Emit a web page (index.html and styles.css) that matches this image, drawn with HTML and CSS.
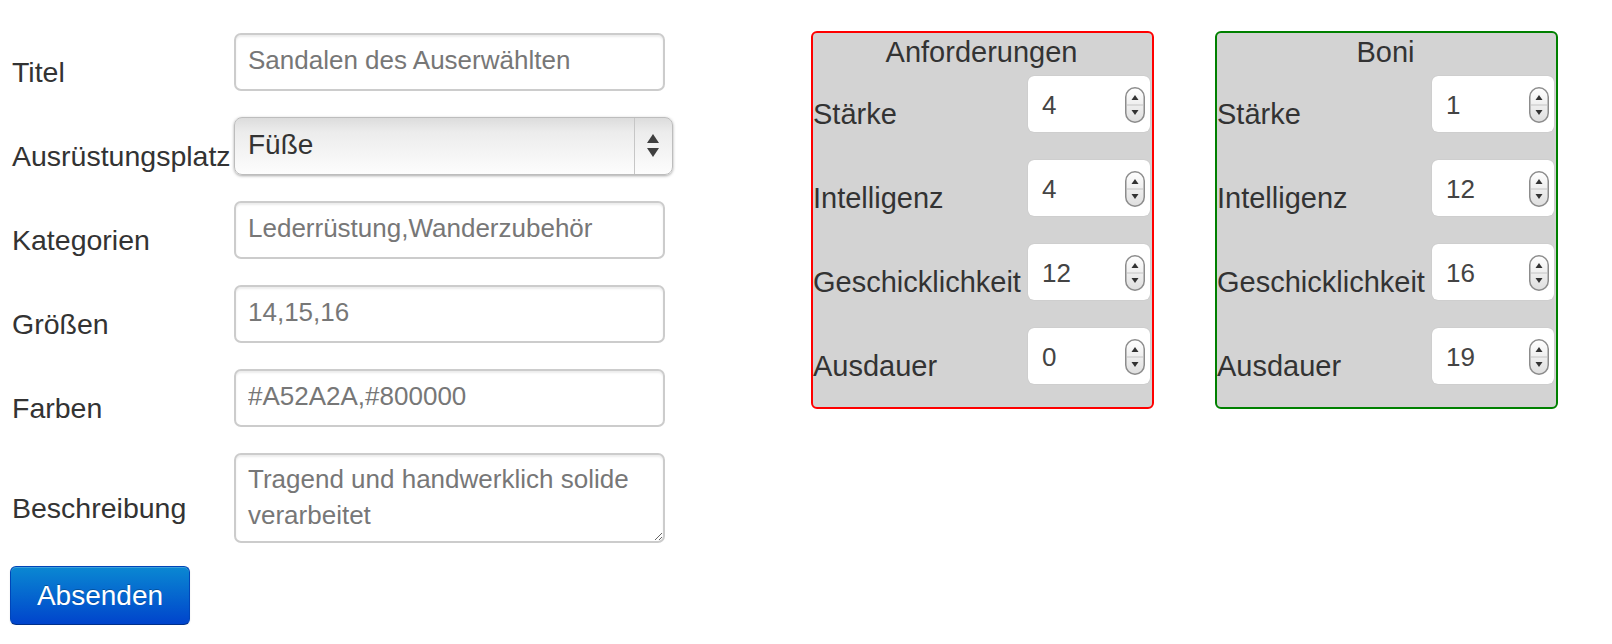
FILE: index.html
```html
<!DOCTYPE html>
<html lang="de">
<head>
<meta charset="utf-8">
<title>Ausrüstung</title>
<link rel="stylesheet" href="styles.css">
</head>
<body>
<svg class="defs" width="0" height="0" aria-hidden="true">
  <defs>
    <linearGradient id="spinGrad" x1="0" y1="0" x2="0" y2="1">
      <stop offset="0" stop-color="#ffffff"/>
      <stop offset="1" stop-color="#dedede"/>
    </linearGradient>
  </defs>
</svg>
<div class="page">
  <form class="item-form">
    <div class="row">
      <label class="lbl">Titel</label>
      <input class="field" type="text" value="Sandalen des Auserwählten">
    </div>
    <div class="row">
      <label class="lbl">Ausrüstungsplatz</label>
      <div class="select">
        <span class="select-value">Füße</span>
        <span class="select-btn">
          <svg width="37" height="56" viewBox="0 0 37 56">
            <path d="M12 25 L24 25 L18 16 Z" fill="#3f3f3f"/>
            <path d="M12 30 L24 30 L18 39 Z" fill="#3f3f3f"/>
          </svg>
        </span>
      </div>
    </div>
    <div class="row">
      <label class="lbl">Kategorien</label>
      <input class="field" type="text" value="Lederrüstung,Wanderzubehör">
    </div>
    <div class="row">
      <label class="lbl">Größen</label>
      <input class="field" type="text" value="14,15,16">
    </div>
    <div class="row">
      <label class="lbl">Farben</label>
      <input class="field" type="text" value="#A52A2A,#800000">
    </div>
    <div class="row row-area">
      <label class="lbl">Beschreibung</label>
      <textarea class="field area">Tragend und handwerklich solide verarbeitet</textarea>
    </div>
    <button class="btn" type="button">Absenden</button>
  </form>

  <div class="panel panel-req">
    <div class="panel-title">Anforderungen</div>
    <div class="stat">
      <span class="stat-label">Stärke</span>
      <div class="num"><span class="num-value">4</span><svg class="spin" width="20" height="36" viewBox="0 0 20 36"><rect x="0.75" y="0.75" width="18.5" height="34.5" rx="9.25" fill="url(#spinGrad)" stroke="#8c8c8c" stroke-width="1.5"/><line x1="2" y1="18" x2="18" y2="18" stroke="#c4c4c4" stroke-width="1"/><path d="M6.5 13 L13.5 13 L10 8 Z" fill="#333"/><path d="M6.5 23 L13.5 23 L10 28 Z" fill="#333"/></svg></div>
    </div>
    <div class="stat">
      <span class="stat-label">Intelligenz</span>
      <div class="num"><span class="num-value">4</span><svg class="spin" width="20" height="36" viewBox="0 0 20 36"><rect x="0.75" y="0.75" width="18.5" height="34.5" rx="9.25" fill="url(#spinGrad)" stroke="#8c8c8c" stroke-width="1.5"/><line x1="2" y1="18" x2="18" y2="18" stroke="#c4c4c4" stroke-width="1"/><path d="M6.5 13 L13.5 13 L10 8 Z" fill="#333"/><path d="M6.5 23 L13.5 23 L10 28 Z" fill="#333"/></svg></div>
    </div>
    <div class="stat">
      <span class="stat-label">Geschicklichkeit</span>
      <div class="num"><span class="num-value">12</span><svg class="spin" width="20" height="36" viewBox="0 0 20 36"><rect x="0.75" y="0.75" width="18.5" height="34.5" rx="9.25" fill="url(#spinGrad)" stroke="#8c8c8c" stroke-width="1.5"/><line x1="2" y1="18" x2="18" y2="18" stroke="#c4c4c4" stroke-width="1"/><path d="M6.5 13 L13.5 13 L10 8 Z" fill="#333"/><path d="M6.5 23 L13.5 23 L10 28 Z" fill="#333"/></svg></div>
    </div>
    <div class="stat">
      <span class="stat-label">Ausdauer</span>
      <div class="num"><span class="num-value">0</span><svg class="spin" width="20" height="36" viewBox="0 0 20 36"><rect x="0.75" y="0.75" width="18.5" height="34.5" rx="9.25" fill="url(#spinGrad)" stroke="#8c8c8c" stroke-width="1.5"/><line x1="2" y1="18" x2="18" y2="18" stroke="#c4c4c4" stroke-width="1"/><path d="M6.5 13 L13.5 13 L10 8 Z" fill="#333"/><path d="M6.5 23 L13.5 23 L10 28 Z" fill="#333"/></svg></div>
    </div>
  </div>

  <div class="panel panel-bonus">
    <div class="panel-title">Boni</div>
    <div class="stat">
      <span class="stat-label">Stärke</span>
      <div class="num"><span class="num-value">1</span><svg class="spin" width="20" height="36" viewBox="0 0 20 36"><rect x="0.75" y="0.75" width="18.5" height="34.5" rx="9.25" fill="url(#spinGrad)" stroke="#8c8c8c" stroke-width="1.5"/><line x1="2" y1="18" x2="18" y2="18" stroke="#c4c4c4" stroke-width="1"/><path d="M6.5 13 L13.5 13 L10 8 Z" fill="#333"/><path d="M6.5 23 L13.5 23 L10 28 Z" fill="#333"/></svg></div>
    </div>
    <div class="stat">
      <span class="stat-label">Intelligenz</span>
      <div class="num"><span class="num-value">12</span><svg class="spin" width="20" height="36" viewBox="0 0 20 36"><rect x="0.75" y="0.75" width="18.5" height="34.5" rx="9.25" fill="url(#spinGrad)" stroke="#8c8c8c" stroke-width="1.5"/><line x1="2" y1="18" x2="18" y2="18" stroke="#c4c4c4" stroke-width="1"/><path d="M6.5 13 L13.5 13 L10 8 Z" fill="#333"/><path d="M6.5 23 L13.5 23 L10 28 Z" fill="#333"/></svg></div>
    </div>
    <div class="stat">
      <span class="stat-label">Geschicklichkeit</span>
      <div class="num"><span class="num-value">16</span><svg class="spin" width="20" height="36" viewBox="0 0 20 36"><rect x="0.75" y="0.75" width="18.5" height="34.5" rx="9.25" fill="url(#spinGrad)" stroke="#8c8c8c" stroke-width="1.5"/><line x1="2" y1="18" x2="18" y2="18" stroke="#c4c4c4" stroke-width="1"/><path d="M6.5 13 L13.5 13 L10 8 Z" fill="#333"/><path d="M6.5 23 L13.5 23 L10 28 Z" fill="#333"/></svg></div>
    </div>
    <div class="stat">
      <span class="stat-label">Ausdauer</span>
      <div class="num"><span class="num-value">19</span><svg class="spin" width="20" height="36" viewBox="0 0 20 36"><rect x="0.75" y="0.75" width="18.5" height="34.5" rx="9.25" fill="url(#spinGrad)" stroke="#8c8c8c" stroke-width="1.5"/><line x1="2" y1="18" x2="18" y2="18" stroke="#c4c4c4" stroke-width="1"/><path d="M6.5 13 L13.5 13 L10 8 Z" fill="#333"/><path d="M6.5 23 L13.5 23 L10 28 Z" fill="#333"/></svg></div>
    </div>
  </div>
</div>
</body>
</html>
```

FILE: styles.css
```css
body {
  margin: 0;
  background: #ffffff;
  color: #333333;
  font-family: "Liberation Sans", Arial, Helvetica, sans-serif;
}

.defs {
  position: absolute;
  width: 0;
  height: 0;
}

.page {
  display: flex;
  align-items: flex-start;
  padding: 31px 0 0 10px;
}

/* ---------- left form ---------- */
.item-form {
  width: 663px;
  margin: 2px 0 0 0;
  display: flex;
  flex-direction: column;
  align-items: flex-start;
}

.row {
  display: flex;
  align-items: center;
  margin-bottom: 26px;
}

.row-area {
  margin-bottom: 23px;
}

.lbl {
  box-sizing: border-box;
  flex: none;
  width: 224px;
  padding: 20px 0 0 2px;
  font-size: 28.5px;
  line-height: 28px;
  color: #333333;
  white-space: nowrap;
}

.field {
  box-sizing: border-box;
  width: 431px;
  height: 58px;
  margin: 0;
  padding: 7px 12px 11px;
  border: 2px solid #cccccc;
  border-radius: 7px;
  background: #ffffff;
  box-shadow: inset 0 2px 2px rgba(0, 0, 0, 0.075);
  font-family: "Liberation Sans", Arial, Helvetica, sans-serif;
  font-size: 26px;
  line-height: 36px;
  color: #777777;
  outline: none;
}

.area {
  height: 90px;
  padding: 6px 12px;
  overflow: hidden;
}

.select {
  box-sizing: border-box;
  width: 439px;
  height: 58px;
  display: flex;
  align-items: stretch;
  border: 1px solid #bdbdbd;
  border-radius: 8px;
  background: linear-gradient(to bottom, #dcdcdc 0%, #ececec 25%, #f6f6f6 70%, #fdfdfd 100%);
  box-shadow: 0 1px 3px rgba(0, 0, 0, 0.35);
}

.select-value {
  flex: 1;
  display: flex;
  align-items: center;
  padding: 0 0 3px 13px;
  font-size: 28px;
  color: #333333;
}

.select-btn {
  width: 37px;
  border-left: 1px solid #c6c6c6;
  display: flex;
  align-items: center;
}

.btn {
  box-sizing: border-box;
  width: 180px;
  height: 59px;
  margin: 0;
  padding: 0;
  border: 1px solid #0045b8;
  border-bottom-color: #00308a;
  border-radius: 6px;
  background: linear-gradient(to bottom, #0a88d2 0%, #0044cc 100%);
  box-shadow: inset 0 1px 0 rgba(255, 255, 255, 0.2), 0 1px 2px rgba(0, 0, 0, 0.1);
  color: #ffffff;
  font-family: "Liberation Sans", Arial, Helvetica, sans-serif;
  font-size: 28px;
  text-shadow: 0 -1px 0 rgba(0, 0, 0, 0.25);
}

/* ---------- stat panels ---------- */
.panel {
  box-sizing: border-box;
  flex: none;
  width: 343px;
  padding: 3px 2px 23px 0;
  border: 2px solid;
  border-radius: 6px;
  background: #d3d3d3;
}

.panel-req {
  border-color: #ff0000;
  margin-left: 138px;
}

.panel-bonus {
  border-color: #008000;
  margin-left: 61px;
}

.panel-title {
  text-align: center;
  font-size: 29px;
  line-height: 32px;
  margin-bottom: 8px;
  color: #333333;
}

.stat {
  display: flex;
  align-items: center;
  margin-bottom: 28px;
}

.stat:last-child {
  margin-bottom: 0;
}

.stat-label {
  flex: 1;
  padding-top: 19px;
  font-size: 29px;
  line-height: 28px;
  white-space: nowrap;
  color: #333333;
}

.num {
  box-sizing: border-box;
  flex: none;
  width: 122px;
  height: 56px;
  display: flex;
  align-items: center;
  padding: 2px 5px 0 14px;
  border-radius: 6px;
  background: #ffffff;
  box-shadow: 0 0 1px rgba(0, 0, 0, 0.2);
  font-size: 26px;
  color: #444444;
}

.num-value {
  flex: 1;
}

.spin {
  display: block;
  flex: none;
}
```
